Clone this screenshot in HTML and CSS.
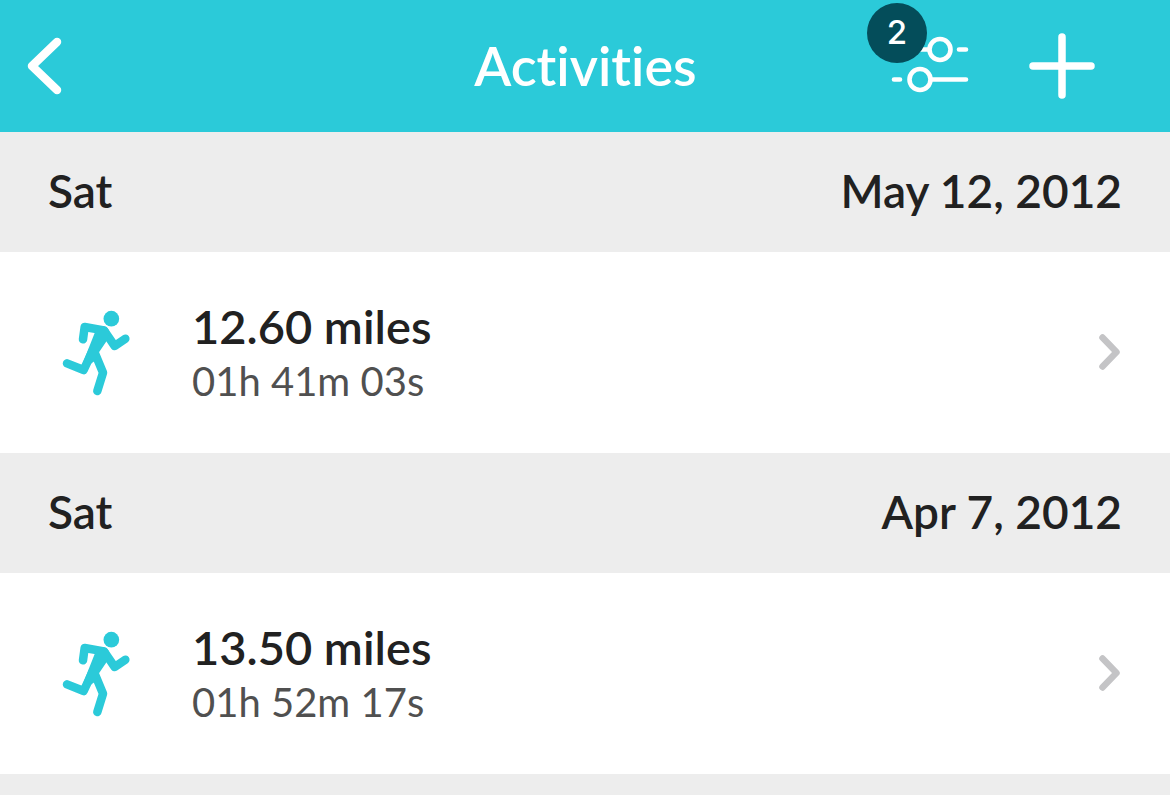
FILE: index.html
```html
<!DOCTYPE html>
<html lang="en">
<head>
<meta charset="utf-8">
<meta name="viewport" content="width=device-width, initial-scale=1">
<title>Activities</title>
<link rel="stylesheet" href="styles.css">
</head>
<body>
<svg class="symbols" aria-hidden="true">
  <symbol id="runner" viewBox="60 51 216 270">
    <circle cx="214" cy="86" r="23.5" fill="currentColor"/>
    <path d="M129 148L134 111L192 121L224 168L256 146M81 220L131 240L158 182M165 190L189 248L172 303" fill="none" stroke="currentColor" stroke-width="25.5" stroke-linecap="round" stroke-linejoin="round"/>
    <path d="M164 129L192 109Q204 112 208 124L200 153L175 190L165 212L138 232L124 230Z" fill="currentColor"/>
  </symbol>
  <symbol id="chevron" viewBox="0 0 24 40">
    <path d="M4.500 5.500L18.500 20L4.500 34.500" fill="none" stroke="currentColor" stroke-width="6.500" stroke-linecap="round" stroke-linejoin="round"/>
  </symbol>
</svg>
<header class="bar">
  <button class="bar-button back" type="button" aria-label="Back">
    <svg width="36" height="60" viewBox="0 0 36 60"><path d="M31 6L6 30L31 54" fill="none" stroke="currentColor" stroke-width="8.5" stroke-linecap="round" stroke-linejoin="round"/></svg>
  </button>
  <h1 class="title">Activities</h1>
  <div class="actions">
    <button class="bar-button filter" type="button" aria-label="Filters, 2 active">
      <svg width="78" height="60" viewBox="0 0 78 60" fill="none" stroke="currentColor" stroke-width="4.6" stroke-linecap="round"><circle cx="49" cy="13.5" r="10.5"/><path d="M3 13.5H38M68 13.5H75M3 43.5H9M40 43.5H75"/><circle cx="29" cy="43.5" r="10.5"/></svg>
      <span class="badge">2</span>
    </button>
    <button class="bar-button" type="button" aria-label="Add activity">
      <svg width="66" height="66" viewBox="0 0 66 66"><path d="M33 4V62M4 33H62" fill="none" stroke="currentColor" stroke-width="7.5" stroke-linecap="round"/></svg>
    </button>
  </div>
</header>
<main>
  <section>
    <h2 class="day"><span>Sat</span><time datetime="2012-05-12">May 12, 2012</time></h2>
    <a class="activity" href="#may-12">
      <svg class="runner" aria-hidden="true"><use href="#runner"/></svg>
      <span class="details"><span class="distance">12.60 miles</span><span class="duration">01h 41m 03s</span></span>
      <svg class="chevron" aria-hidden="true"><use href="#chevron"/></svg>
    </a>
  </section>
  <section>
    <h2 class="day"><span>Sat</span><time datetime="2012-04-07">Apr 7, 2012</time></h2>
    <a class="activity" href="#apr-7">
      <svg class="runner" aria-hidden="true"><use href="#runner"/></svg>
      <span class="details"><span class="distance">13.50 miles</span><span class="duration">01h 52m 17s</span></span>
      <svg class="chevron" aria-hidden="true"><use href="#chevron"/></svg>
    </a>
  </section>
</main>
</body>
</html>
```
FILE: styles.css
```css
* { box-sizing: border-box; }
body {
  margin: 0;
  min-height: 100vh;
  background: #ededed;
  color: #212121;
  font-family: Lato, sans-serif;
  font-variant-ligatures: none;
}
svg { display: block; flex: none; }
.symbols { position: absolute; width: 0; height: 0; }
.bar {
  display: grid;
  grid-template-columns: 1fr auto 1fr;
  align-items: center;
  height: 132px;
  padding: 0 75px 0 26px;
  background: #2bcad9;
  color: #fff;
}
.bar-button {
  padding: 0;
  border: 0;
  background: none;
  color: inherit;
  font: inherit;
}
.back { justify-self: start; }
.title {
  margin: 0 0 0 50px;
  font-size: 54px;
  line-height: 64px;
  font-weight: 600;
}
.actions {
  display: flex;
  align-items: center;
  justify-content: flex-end;
  gap: 60px;
}
.filter { position: relative; }
.badge {
  position: absolute;
  top: -33px;
  left: -24px;
  width: 60px;
  height: 60px;
  border-radius: 50%;
  background: #044d5a;
  font-family: Inter, sans-serif;
  font-size: 33px;
  line-height: 58px;
  font-weight: 500;
}
.day {
  display: flex;
  justify-content: space-between;
  margin: 0;
  padding: 29px 48px 31px;
  background: #ededed;
  font-size: 46px;
  line-height: 60px;
  font-weight: 600;
}
.activity {
  display: flex;
  align-items: center;
  padding: 45px 48px 46px 60px;
  background: #fff;
  color: inherit;
  text-decoration: none;
}
.runner { width: 72px; height: 90px; color: #2bcad9; }
.details { flex: 1; margin-left: 60px; }
.distance, .duration { display: block; }
.distance { font-size: 47px; line-height: 58px; font-weight: 600; }
.duration { color: #505050; font-size: 40px; line-height: 52px; font-weight: 400; }
.chevron { width: 24px; height: 40px; color: #c4c4c6; }
```
